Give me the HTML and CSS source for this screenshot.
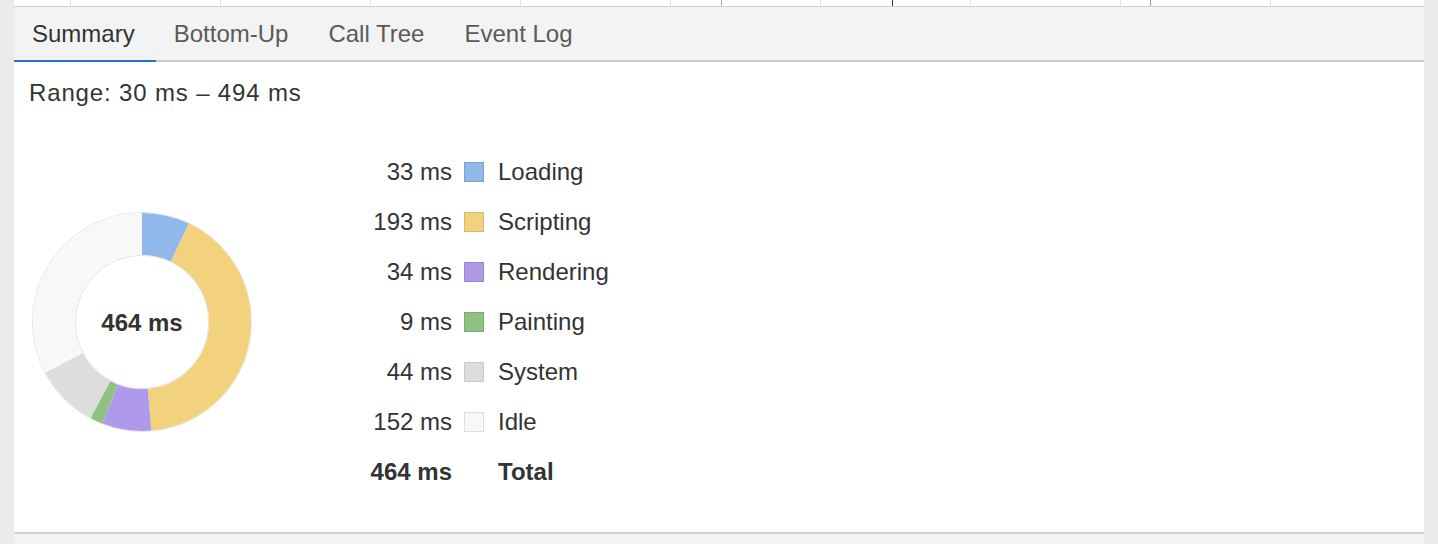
FILE: index.html
```html
<!DOCTYPE html>
<html lang="en">
<head>
<meta charset="utf-8">
<title>Summary</title>
<link rel="stylesheet" href="styles.css">
</head>
<body>
<div class="app">
  <div class="timeline">
    <span class="marker marker-blue"></span>
    <span class="marker marker-dark"></span>
    <span class="marker marker-red"></span>
  </div>
  <div class="tabs">
    <div class="tab active">Summary</div>
    <div class="tab">Bottom-Up</div>
    <div class="tab">Call Tree</div>
    <div class="tab">Event Log</div>
  </div>
  <div class="content">
    <div class="range">Range: 30 ms – 494 ms</div>
    <div class="summary">
      <svg class="donut" width="220" height="220" viewBox="0 0 220 220">
        <circle class="outline" cx="110" cy="110" r="109.5"></circle>
        <g transform="rotate(-90 110 110)">
          <circle class="seg seg-loading" cx="110" cy="110" r="88" pathLength="465" stroke-dasharray="33 432" stroke-dashoffset="0"></circle>
          <circle class="seg seg-scripting" cx="110" cy="110" r="88" pathLength="465" stroke-dasharray="193 272" stroke-dashoffset="-33"></circle>
          <circle class="seg seg-rendering" cx="110" cy="110" r="88" pathLength="465" stroke-dasharray="34 431" stroke-dashoffset="-226"></circle>
          <circle class="seg seg-painting" cx="110" cy="110" r="88" pathLength="465" stroke-dasharray="9 456" stroke-dashoffset="-260"></circle>
          <circle class="seg seg-system" cx="110" cy="110" r="88" pathLength="465" stroke-dasharray="44 421" stroke-dashoffset="-269"></circle>
          <circle class="seg seg-idle" cx="110" cy="110" r="88" pathLength="465" stroke-dasharray="152 313" stroke-dashoffset="-313"></circle>
        </g>
        <circle class="inner" cx="110" cy="110" r="66.5"></circle>
        <text class="donut-label" x="110" y="119" text-anchor="middle">464 ms</text>
      </svg>
      <div class="legend">
        <div class="val">33 ms</div><div class="sw sw-loading"></div><div class="lbl">Loading</div>
        <div class="val">193 ms</div><div class="sw sw-scripting"></div><div class="lbl">Scripting</div>
        <div class="val">34 ms</div><div class="sw sw-rendering"></div><div class="lbl">Rendering</div>
        <div class="val">9 ms</div><div class="sw sw-painting"></div><div class="lbl">Painting</div>
        <div class="val">44 ms</div><div class="sw sw-system"></div><div class="lbl">System</div>
        <div class="val">152 ms</div><div class="sw sw-idle"></div><div class="lbl">Idle</div>
        <div class="val bold">464 ms</div><div class="sw-empty"></div><div class="lbl bold">Total</div>
      </div>
    </div>
  </div>
  <div class="footer"></div>
</div>
</body>
</html>
```
FILE: styles.css
```css
html, body {
  margin: 0;
  padding: 0;
  height: 100%;
}
body {
  background: #ebebeb;
  font-family: "Liberation Sans", Arial, Helvetica, sans-serif;
  color: #333333;
  overflow: hidden;
}
.app {
  margin: 0 14px;
  height: 544px;
  display: flex;
  flex-direction: column;
}
.timeline {
  position: relative;
  height: 6px;
  background-color: #ffffff;
  background-image: repeating-linear-gradient(to right, transparent 0 149px, #e2e2e2 149px 150px);
  background-position: -93px 0;
  border-bottom: 1px solid #d0d0d0;
  flex: none;
}
.marker {
  position: absolute;
  top: 0;
  width: 1px;
  height: 6px;
}
.marker-blue { left: 707px; background: #8db0e6; }
.marker-dark { left: 878px; background: #1d3a30; }
.marker-red { left: 1136px; background: #e2837e; }
.tabs {
  display: flex;
  height: 53px;
  background: #f3f3f3;
  border-bottom: 2px solid #cccccc;
  flex: none;
}
.tab {
  padding: 0 22px 0 18px;
  line-height: 53px;
  font-size: 24px;
  color: #5a5a5a;
  white-space: nowrap;
}
.tab.active {
  color: #333333;
  border-bottom: 2px solid #1f73d3;
  margin-bottom: -2px;
  padding-right: 21px;
}
.content {
  flex: 1;
  background: #ffffff;
  padding: 17px 0 0 15px;
  border-bottom: 2px solid #d2d2d2;
}
.range {
  font-size: 24px;
  line-height: 28px;
  letter-spacing: 0.85px;
  color: #333333;
}
.summary {
  display: flex;
  align-items: center;
  margin-top: 40px;
}
.donut {
  display: block;
  margin-left: 3px;
  flex: none;
}
.outline {
  fill: none;
  stroke: #e6e6e6;
  stroke-width: 1;
}
.inner {
  fill: #ffffff;
  stroke: #e4e4e4;
  stroke-width: 1;
}
.seg {
  fill: none;
  stroke-width: 42;
}
.seg-loading { stroke: #90b8ea; }
.seg-scripting { stroke: #f3d27e; }
.seg-rendering { stroke: #af99eb; }
.seg-painting { stroke: #8fc281; }
.seg-system { stroke: #dddddd; }
.seg-idle { stroke: #f8f8f8; }
.donut-label {
  font-family: "Liberation Sans", Arial, sans-serif;
  font-size: 24px;
  font-weight: bold;
  fill: #333333;
}
.legend {
  margin-left: 108px;
  display: grid;
  grid-template-columns: 92px 20px auto;
  grid-auto-rows: 50px;
  column-gap: 12px;
  align-items: center;
  font-size: 24px;
  color: #333333;
}
.val {
  text-align: right;
  white-space: nowrap;
}
.lbl {
  padding-left: 2px;
  white-space: nowrap;
}
.bold {
  font-weight: bold;
}
.sw {
  width: 20px;
  height: 20px;
  box-sizing: border-box;
  border: 1.5px solid rgba(0, 0, 0, 0.12);
}
.sw-loading { background: #90b8ea; }
.sw-scripting { background: #f3d27e; }
.sw-rendering { background: #af99eb; }
.sw-painting { background: #8fc281; }
.sw-system { background: #dddddd; border-color: #c8c8c8; }
.sw-idle { background: #f8f8f8; border-color: #dedede; }
.footer {
  height: 10px;
  background: #f3f3f3;
  flex: none;
}
```
